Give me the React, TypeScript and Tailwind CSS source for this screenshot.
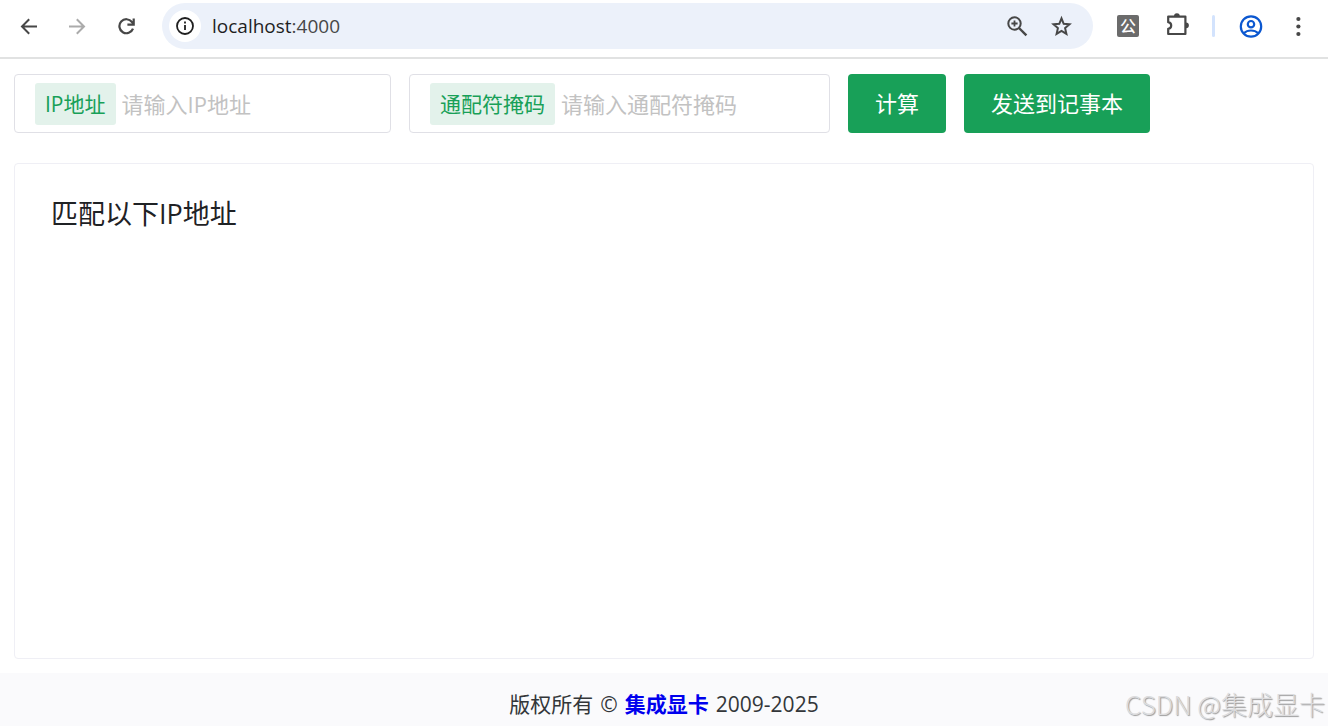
import { useState } from "react";

function BackIcon() {
  return (
    <svg width="18" height="18" viewBox="0 0 18 18" fill="none" stroke="currentColor" strokeWidth="2">
      <path d="M17 9.5H2.5M9.2 2.3 2 9.5l7.2 7.2" />
    </svg>
  );
}

function ForwardIcon() {
  return (
    <svg width="18" height="18" viewBox="0 0 18 18" fill="none" stroke="currentColor" strokeWidth="2">
      <path d="M0 9.5h14.5M7.8 2.3 15 9.5l-7.2 7.2" />
    </svg>
  );
}

function ReloadIcon() {
  return (
    <svg width="18" height="18" viewBox="0 0 18 18" fill="none" stroke="currentColor" strokeWidth="2.2">
      <path d="M15 11.6A7 7 0 1 1 14 5L15.4 7" />
      <path d="M15.7 1.4v6.2H9.4" />
    </svg>
  );
}

function InfoIcon() {
  return (
    <svg width="20" height="20" viewBox="0 0 20 20" fill="none" stroke="currentColor" strokeWidth="1.8">
      <circle cx="10" cy="10" r="8" />
      <path d="M10 9v5M10 5.6v2" />
    </svg>
  );
}

function ZoomInIcon() {
  return (
    <svg width="22" height="22" viewBox="0 0 22 22" fill="none" stroke="currentColor" strokeWidth="2">
      <circle cx="8.5" cy="8.5" r="6.2" />
      <path d="M13 13l7.4 7.4" strokeWidth="2.4" />
      <path d="M8.5 5.4v6.2M5.4 8.5h6.2" strokeWidth="1.8" />
    </svg>
  );
}

function StarIcon() {
  return (
    <svg width="24" height="24" viewBox="0 0 24 24" fill="none" stroke="currentColor" strokeWidth="2">
      <path d="m12.5 4.4 2.2 5.4 5.8.5-4.4 3.8 1.3 5.7-4.9-3-4.9 3 1.3-5.7-4.4-3.8 5.8-.5z" />
    </svg>
  );
}

function PuzzleIcon() {
  return (
    <svg width="26" height="26" viewBox="0 0 26 26">
      <path
        d="M3.2 3.6h17.2v17.4H3.2v-5.2c1.9-.3 3-1.6 3-3.3s-1.1-3-3-3.3z"
        fill="none"
        stroke="currentColor"
        strokeWidth="2.2"
        strokeLinejoin="round"
      />
      <path d="M9 3.2a2.9 2.9 0 0 1 5.8 0zM21 9.4a2.9 2.9 0 0 1 0 5.8z" fill="currentColor" />
    </svg>
  );
}

function ProfileIcon() {
  return (
    <svg width="24" height="24" viewBox="0 0 24 24" fill="none" stroke="currentColor" strokeWidth="2.2">
      <circle cx="12" cy="12.5" r="10.2" />
      <circle cx="12" cy="10.2" r="3.2" />
      <path d="M4.8 19.2c1.9-1.8 4.4-2.7 7.2-2.7s5.3.9 7.2 2.7" />
    </svg>
  );
}

function MenuIcon() {
  return (
    <svg width="6" height="22" viewBox="0 0 6 22" fill="currentColor">
      <circle cx="3.4" cy="4" r="2.1" />
      <circle cx="3.4" cy="11.5" r="2.1" />
      <circle cx="3.4" cy="19" r="2.1" />
    </svg>
  );
}

function BrowserBar() {
  return (
    <header className="flex items-center border-b-2 border-[#e1e2e2] pt-[3px] pb-2 pr-[27px] pl-5 text-[#474747]">
      <div className="flex items-center gap-[31px]">
        <button type="button" aria-label="Back">
          <BackIcon />
        </button>
        <button type="button" aria-label="Forward" className="text-[#ababab]">
          <ForwardIcon />
        </button>
        <button type="button" aria-label="Reload">
          <ReloadIcon />
        </button>
      </div>
      <div className="ml-[26px] flex h-[46px] flex-1 items-center rounded-full bg-[#ecf1fa] pr-5 pl-[7px]">
        <button
          type="button"
          aria-label="Site information"
          className="flex h-8 w-8 items-center justify-center rounded-full bg-white text-[#1f1f1f]"
        >
          <InfoIcon />
        </button>
        <p className="ml-[11px] flex-1 text-[19px] leading-6 text-[#1f1f1f]">
          localhost<span className="text-[#474747]">:4000</span>
        </p>
        <div className="flex items-center gap-[21px]">
          <button type="button" aria-label="Zoom">
            <ZoomInIcon />
          </button>
          <button type="button" aria-label="Bookmark">
            <StarIcon />
          </button>
        </div>
      </div>
      <div className="ml-6 flex items-center">
        <button
          type="button"
          className="flex h-[22px] w-[22px] items-center justify-center rounded-xs bg-[#6b6b6b] text-base leading-5 font-medium text-white"
        >
          公
        </button>
        <button type="button" aria-label="Extensions" className="ml-[26px]">
          <PuzzleIcon />
        </button>
        <div className="ml-[21px] h-[22px] w-[3px] rounded-full bg-[#d3e3fd]" />
        <button type="button" aria-label="Profile" className="ml-6 text-[#0b57d0]">
          <ProfileIcon />
        </button>
        <button type="button" aria-label="Menu" className="ml-8">
          <MenuIcon />
        </button>
      </div>
    </header>
  );
}

interface TaggedInputProps {
  id: string;
  label: string;
  placeholder: string;
  value: string;
  onChange: (value: string) => void;
  className: string;
}

function TaggedInput({ id, label, placeholder, value, onChange, className }: TaggedInputProps) {
  return (
    <div className={`flex h-[59px] items-center rounded border border-[#e0e0e6] px-5 ${className}`}>
      <label
        htmlFor={id}
        className="shrink-0 rounded-[3px] bg-[#e3f2eb] px-[10px] text-[21px] leading-[42px] text-[#18a058]"
      >
        {label}
      </label>
      <input
        id={id}
        type="text"
        value={value}
        onChange={(e) => onChange(e.target.value)}
        placeholder={placeholder}
        className="ml-[6px] min-w-0 flex-1 text-[22px] leading-8 text-[#333639] placeholder:text-[#c2c2c2] focus:outline-none"
      />
    </div>
  );
}

export default function App() {
  const [ip, setIp] = useState("");
  const [wildcard, setWildcard] = useState("");

  return (
    <div className="flex min-h-screen flex-col bg-white font-['Open_Sans','Noto_Sans_CJK_SC',sans-serif]">
      <BrowserBar />

      <main className="flex flex-1 flex-col px-[14px] pt-[15px] pb-[14px]">
        <form className="flex items-center gap-[18px]" onSubmit={(e) => e.preventDefault()}>
          <TaggedInput
            id="ip"
            label="IP地址"
            placeholder="请输入IP地址"
            value={ip}
            onChange={setIp}
            className="w-[377px]"
          />
          <TaggedInput
            id="wildcard"
            label="通配符掩码"
            placeholder="请输入通配符掩码"
            value={wildcard}
            onChange={setWildcard}
            className="w-[421px]"
          />
          <button type="submit" className="h-[59px] rounded bg-[#18a058] px-[27px] text-[22px] text-white">
            计算
          </button>
          <button type="button" className="h-[59px] rounded bg-[#18a058] px-[27px] text-[22px] text-white">
            发送到记事本
          </button>
        </form>

        <section className="mt-[30px] flex-1 rounded border border-[#efeff5] px-9 py-8">
          <h1 className="text-[27px] leading-9 text-[#1f2225]">匹配以下IP地址</h1>
        </section>
      </main>

      <footer className="relative flex justify-center gap-[7px] bg-[#fafafc] pt-4 pb-[7px] text-[21px] leading-[30px] text-[#333639]">
        <span>版权所有</span>
        <span>©</span>
        <a href="#" className="font-bold text-[#0000ee]">
          集成显卡
        </a>
        <span>2009-2025</span>
        <span className="absolute right-[3px] bottom-1 font-['Noto_Sans_CJK_SC',sans-serif] text-[26px] leading-9 font-light text-[#dcdcde] [text-shadow:1px_1px_1px_#999]">
          CSDN @集成显卡
        </span>
      </footer>
    </div>
  );
}
